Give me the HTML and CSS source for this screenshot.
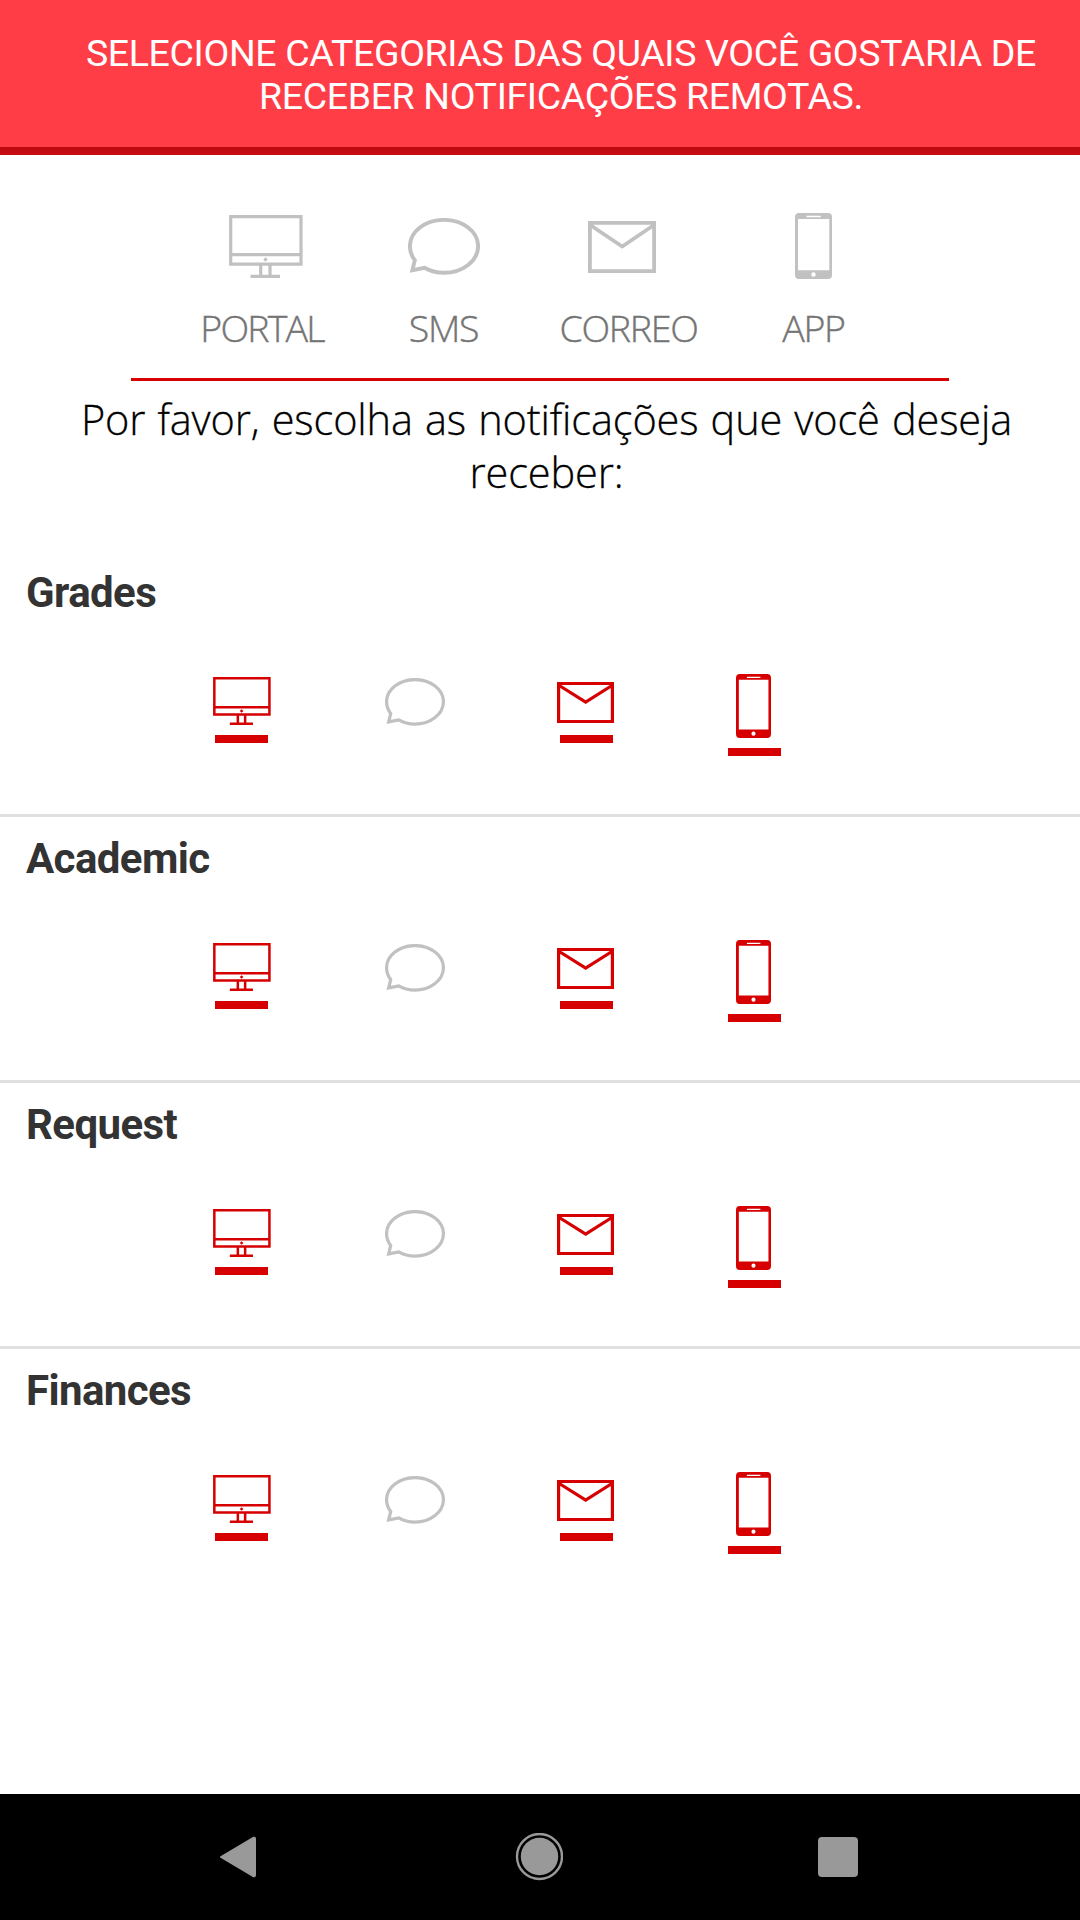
FILE: index.html
```html
<!DOCTYPE html>
<html lang="pt">
<head>
<meta charset="utf-8">
<title>Notificações</title>
<link rel="stylesheet" href="styles.css">
</head>
<body>
<svg class="defs" aria-hidden="true">
  <symbol id="monitor" viewBox="0 0 74 63" preserveAspectRatio="none">
    <path d="M1.7 1.7H72V49.2H1.7ZM1.7 39.7H72M31.7 50V61M41 50V61M21.5 61.3H51" fill="none" stroke="currentColor" stroke-width="3.2"/>
    <path d="M36.5 42.2L38.8 44.5L36.5 46.8L34.2 44.5Z" fill="currentColor"/>
  </symbol>
  <symbol id="bubble" viewBox="0 0 72 57" preserveAspectRatio="none">
    <path d="M4.4 52.2L6.8 42.2C3.6 38 1.9 33.2 1.9 28.2C1.9 13.6 17.2 1.9 36 1.9S70.1 13.6 70.1 28.2S54.8 54.8 36 54.8C28.600 54.8 22 53 16.500 49.8Z" fill="none" stroke="currentColor" stroke-width="3.9"/>
  </symbol>
  <symbol id="mail" viewBox="0 0 68 52" preserveAspectRatio="none">
    <path d="M1.900 1.900H66.100V50.100H1.900ZM2.200 4L34.200 25.500L66 4" fill="none" stroke="currentColor" stroke-width="3.8"/>
  </symbol>
  <symbol id="phone" viewBox="0 0 37 66" preserveAspectRatio="none">
    <path fill="currentColor" fill-rule="evenodd" d="M4 0H33Q37 0 37 4V62Q37 66 33 66H4Q0 66 0 62V4Q0 0 4 0ZM3 6V57.300H34.300V6ZM11.500 2.800V4.200H25.800V2.800ZM18.500 59.300A2.200 2.200 0 1 0 18.500 63.700A2.200 2.200 0 1 0 18.500 59.300Z"/>
  </symbol>
</svg>

<div class="screen">
  <header class="header">SELECIONE CATEGORIAS DAS QUAIS VOCÊ GOSTARIA DE<br>RECEBER NOTIFICAÇÕES REMOTAS.</header>

  <main class="content">
    <div class="legend">
      <div class="legend-item"><div class="legend-icon shift-right"><svg width="74" height="63"><use href="#monitor"/></svg></div><span class="label portal">PORTAL</span></div>
      <div class="legend-item"><div class="legend-icon"><svg width="72" height="57"><use href="#bubble"/></svg></div><span class="label">SMS</span></div>
      <div class="legend-item"><div class="legend-icon shift-left"><svg width="68" height="52"><use href="#mail"/></svg></div><span class="label">CORREO</span></div>
      <div class="legend-item"><div class="legend-icon raised"><svg width="37" height="66"><use href="#phone"/></svg></div><span class="label">APP</span></div>
    </div>
    <p class="intro">Por favor, escolha as notificações que você deseja<br>receber:</p>

    <section class="category">
      <h2 class="title">Grades</h2>
      <div class="options">
        <div class="option portal-option on"><svg width="58" height="48"><use href="#monitor"/></svg></div>
        <div class="option sms-option"><svg width="60" height="48"><use href="#bubble"/></svg></div>
        <div class="option mail-option on"><svg width="57" height="41"><use href="#mail"/></svg></div>
        <div class="option app-option on"><svg width="35" height="64"><use href="#phone"/></svg></div>
      </div>
    </section>
    <section class="category">
      <h2 class="title">Academic</h2>
      <div class="options">
        <div class="option portal-option on"><svg width="58" height="48"><use href="#monitor"/></svg></div>
        <div class="option sms-option"><svg width="60" height="48"><use href="#bubble"/></svg></div>
        <div class="option mail-option on"><svg width="57" height="41"><use href="#mail"/></svg></div>
        <div class="option app-option on"><svg width="35" height="64"><use href="#phone"/></svg></div>
      </div>
    </section>
    <section class="category">
      <h2 class="title">Request</h2>
      <div class="options">
        <div class="option portal-option on"><svg width="58" height="48"><use href="#monitor"/></svg></div>
        <div class="option sms-option"><svg width="60" height="48"><use href="#bubble"/></svg></div>
        <div class="option mail-option on"><svg width="57" height="41"><use href="#mail"/></svg></div>
        <div class="option app-option on"><svg width="35" height="64"><use href="#phone"/></svg></div>
      </div>
    </section>
    <section class="category">
      <h2 class="title">Finances</h2>
      <div class="options">
        <div class="option portal-option on"><svg width="58" height="48"><use href="#monitor"/></svg></div>
        <div class="option sms-option"><svg width="60" height="48"><use href="#bubble"/></svg></div>
        <div class="option mail-option on"><svg width="57" height="41"><use href="#mail"/></svg></div>
        <div class="option app-option on"><svg width="35" height="64"><use href="#phone"/></svg></div>
      </div>
    </section>
  </main>

  <nav class="navbar">
    <svg width="38" height="42" viewBox="0 0 38 42"><path d="M34 2L2 21L34 40Q36 41 36 39V3Q36 1 34 2Z" fill="#999" stroke="#999" stroke-width="2" stroke-linejoin="round"/></svg>
    <svg width="48" height="48" viewBox="0 0 48 48"><circle cx="24.500" cy="23.500" r="22.500" fill="none" stroke="#999" stroke-width="2.400"/><circle cx="24.500" cy="23.500" r="18.700" fill="#999"/></svg>
    <svg width="40" height="40" viewBox="0 0 40 40"><rect width="40" height="40" rx="4" fill="#999"/></svg>
  </nav>
</div>
</body>
</html>
```
FILE: styles.css
```css
* { box-sizing: border-box; }
body { margin: 0; background: #fff; }
svg { display: block; flex: none; }
.defs { display: none; }

.screen {
  display: flex;
  flex-direction: column;
  width: 1080px;
  height: 1920px;
  overflow: hidden;
}

.header {
  height: 155px;
  padding: 32px 0 0 42px;
  background: linear-gradient(#ba0a10, #cc0b12) bottom / 100% 8px no-repeat #ff3d47;
  color: #fff;
  font: 400 37.5px/43px Roboto, sans-serif;
  letter-spacing: -0.36px;
  text-align: center;
  white-space: nowrap;
}

.content { flex: 1; }

.legend {
  display: grid;
  grid-template-columns: 181.5px 181.5px 188.5px 181.5px;
  width: 818px;
  height: 226px;
  margin: 0 auto;
  padding: 57px 0 0 40.75px;
  border-bottom: 3px solid #d60000;
}
.legend-item { display: flex; flex-direction: column; align-items: center; }
.legend-icon {
  display: flex;
  align-items: center;
  height: 69px;
  color: #c1c1c1;
}
.shift-right { padding-left: 7px; }
.shift-left { padding-right: 14px; }
.raised { padding: 0 1px 2px 0; }
.label {
  margin: 22px 1px 0 0;
  color: #757575;
  font: 300 37.5px/50px "Open Sans", sans-serif;
  letter-spacing: -1.3px;
  -webkit-text-stroke: 0.4px currentColor;
}
.portal { letter-spacing: -1.8px; }

.intro {
  height: 170px;
  margin: 0;
  padding: 12px 0 0 13px;
  color: #000;
  font: 300 41.500px/53px "Open Sans", sans-serif;
  letter-spacing: -0.13px;
  word-spacing: 1.5px;
  text-align: center;
  white-space: nowrap;
  -webkit-text-stroke: 0.3px currentColor;
}

.category { height: 266px; border-bottom: 3px solid #e0e0e0; }
.category:last-child { border-bottom: 0; }
.title {
  height: 123px;
  margin: 0;
  padding: 17px 0 0 26px;
  color: #333;
  font: 700 42px/50px Roboto, sans-serif;
  letter-spacing: -0.6px;
}
.options {
  display: flex;
  align-items: flex-start;
  padding-left: 213px;
}
.option { display: flex; flex-direction: column; align-items: center; color: #c1c1c1; }
.on { color: #d60000; }
.on::after {
  content: "";
  width: 53px;
  height: 8px;
  margin-top: 10px;
  background: #d60000;
}
.portal-option { padding-top: 3px; }
.portal-option::after { margin-right: 1px; }
.sms-option { padding-top: 4px; margin-left: 114px; }
.mail-option { padding-top: 8px; margin-left: 112px; }
.mail-option::after { margin-top: 12px; margin-left: 1px; }
.app-option { margin-left: 114px; }
.app-option svg { margin-right: 2px; }

.navbar {
  display: grid;
  grid-template-columns: 38px 48px 40px;
  column-gap: 257px;
  align-items: center;
  height: 126px;
  padding-left: 220px;
  background: #000;
}
.navbar svg:first-child { margin-left: -1px; }
.navbar svg:last-child { margin-left: -2px; }
```
